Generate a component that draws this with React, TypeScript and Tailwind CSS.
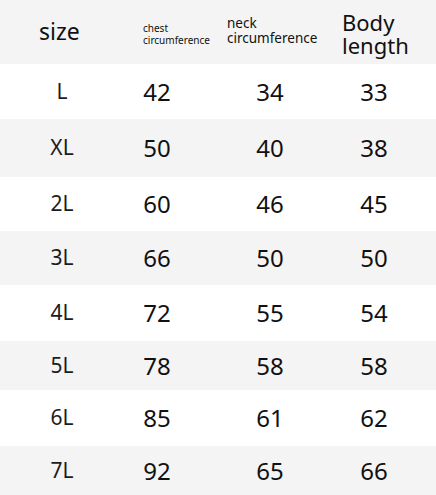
const rows: { size: string; chest: string; neck: string; body: string; h: string; gray: boolean }[] = [
  { size: 'L', chest: '42', neck: '34', body: '33', h: 'h-[55px]', gray: false },
  { size: 'XL', chest: '50', neck: '40', body: '38', h: 'h-[58px]', gray: true },
  { size: '2L', chest: '60', neck: '46', body: '45', h: 'h-[54px]', gray: false },
  { size: '3L', chest: '66', neck: '50', body: '50', h: 'h-[54px]', gray: true },
  { size: '4L', chest: '72', neck: '55', body: '54', h: 'h-[56px]', gray: false },
  { size: '5L', chest: '78', neck: '58', body: '58', h: 'h-[49px]', gray: true },
  { size: '6L', chest: '85', neck: '61', body: '62', h: 'h-[56px]', gray: false },
  { size: '7L', chest: '92', neck: '65', body: '66', h: 'h-[49px]', gray: true },
];

export default function App() {
  return (
    <div className="w-[436px] h-[495px] overflow-hidden bg-white text-[#111] font-['Noto_Sans',sans-serif]">
      <div className="flex h-[64px] items-center bg-[#f4f4f4]">
        <div className="w-[143px] pl-[39px] text-[23px] leading-none pb-[2px]">size</div>
        <div className="w-[84px] text-[10px] leading-[12px] pt-[3px]">
          <div>chest</div>
          <div>circumference</div>
        </div>
        <div className="w-[115px] text-[13.5px] leading-[15px] pb-[3px]">
          <div>neck</div>
          <div>circumference</div>
        </div>
        <div className="text-[22px] leading-[23px] pt-[3px]">
          <div>Body</div>
          <div>length</div>
        </div>
      </div>
      {rows.map((r) => (
        <div
          key={r.size}
          className={`grid grid-cols-[124px_66px_160px_48px] items-center ${r.h} ${r.gray ? 'bg-[#f4f4f4]' : 'bg-white'}`}
        >
          <div className="flex justify-center text-[21px] text-[#1c1c1c]">{r.size}</div>
          <div className="flex justify-center text-[24px]">{r.chest}</div>
          <div className="flex justify-center text-[24px]">{r.neck}</div>
          <div className="flex justify-center text-[24px]">{r.body}</div>
        </div>
      ))}
    </div>
  );
}
